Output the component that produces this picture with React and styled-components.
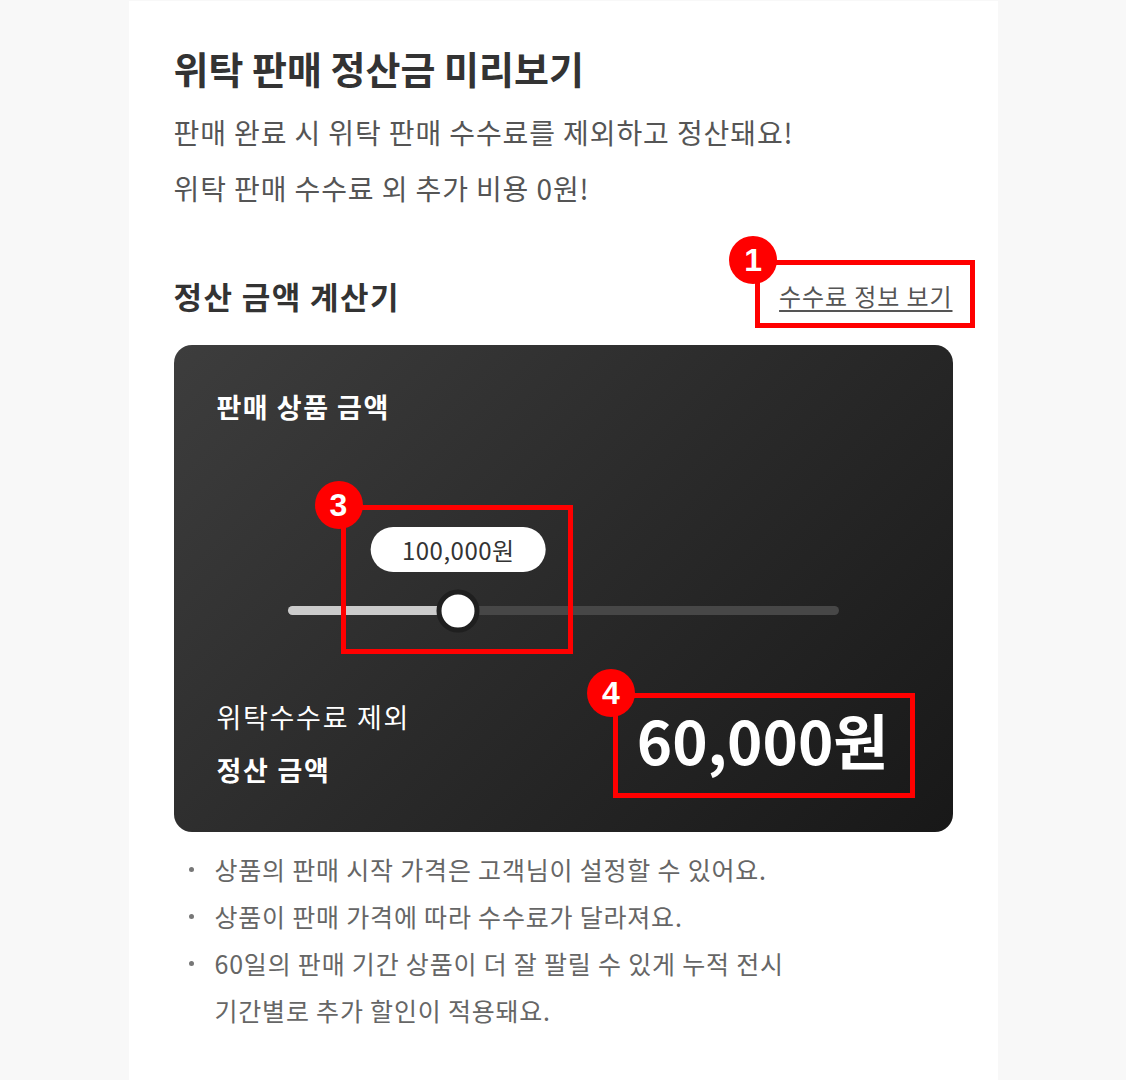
import styled, { createGlobalStyle } from "styled-components";

const GlobalStyle = createGlobalStyle`
  * { box-sizing: border-box; }
  body {
    margin: 0;
    background: #f8f8f8;
    font-family: "Noto Sans CJK KR", "Noto Sans", sans-serif;
  }
`;

const Page = styled.div`
  width: 869px;
  min-height: 1080px;
  margin: 1px auto 0;
  background: #ffffff;
  padding: 42px 45px 0;
`;

const Title = styled.h1`
  margin: 0;
  font-size: 38px;
  line-height: 50px;
  font-weight: 700;
  color: #333;
`;

const Lead = styled.p`
  margin: 11px 0 0;
  font-size: 28px;
  line-height: 56px;
  font-weight: 400;
  color: #555;
  letter-spacing: 0.9px;
`;

const SectionHead = styled.div`
  display: flex;
  justify-content: space-between;
  align-items: center;
  margin-top: 60px;
  height: 40px;
`;

const SectionTitle = styled.h2`
  margin: 0;
  font-size: 31px;
  line-height: 40px;
  font-weight: 700;
  color: #333;
  letter-spacing: 1.4px;
`;

const InfoLink = styled.a`
  display: block;
  font-size: 24px;
  line-height: 32px;
  color: #555;
  text-decoration: underline;
  text-underline-offset: 4px;
  letter-spacing: 0.9px;
`;

const Annotated = styled.div`
  position: relative;
`;

const Frame = styled.span`
  position: absolute;
  top: ${(p) => p.$t}px;
  left: ${(p) => p.$l}px;
  width: ${(p) => p.$w}px;
  height: ${(p) => p.$h}px;
  border: 5px solid #ff0000;
  pointer-events: none;
`;

const Badge = styled.span`
  position: absolute;
  top: -29px;
  left: -31px;
  width: 48px;
  height: 48px;
  border-radius: 50%;
  background: #ff0000;
  color: #fff;
  font-family: "Liberation Sans", Arial, sans-serif;
  font-weight: 700;
  font-size: 32px;
  line-height: 48px;
  text-align: center;
`;

const Card = styled.section`
  margin-top: 29px;
  border-radius: 18px;
  background: linear-gradient(135deg, #3d3d3d 0%, #2a2a2a 50%, #181818 100%);
  padding: 44px 43px 36px;
  color: #fff;
`;

const CardLabel = styled.div`
  font-size: 27px;
  line-height: 36px;
  font-weight: 700;
  letter-spacing: 1.5px;
`;

const SliderArea = styled.div`
  position: relative;
  width: 551px;
  margin: 102px auto 0;
  padding-top: 45px;
  height: 105px;
`;

const ValuePill = styled.div`
  position: absolute;
  top: 0;
  transform: translateX(-50%);
  height: 45px;
  padding: 0 31px;
  border-radius: 23px;
  background: #fff;
  color: #333;
  font-size: 24px;
  line-height: 45px;
  white-space: nowrap;
  letter-spacing: 0.5px;
`;

const Track = styled.div`
  position: relative;
  margin-top: 34px;
  height: 9px;
  border-radius: 5px;
  background: #474747;
`;

const Fill = styled.div`
  height: 100%;
  border-radius: 5px;
  background: #cbcbcb;
`;

const Thumb = styled.div`
  position: absolute;
  top: 50%;
  width: 43px;
  height: 43px;
  border-radius: 50%;
  background: #fff;
  border: 5px solid #1f1f1f;
  transform: translate(-50%, -50%);
`;

const ResultRow = styled.div`
  display: flex;
  justify-content: space-between;
  align-items: center;
  margin-top: 58px;
`;

const ResultLabel = styled.div`
  font-size: 27px;
  line-height: 53px;
  letter-spacing: 1.7px;
  font-weight: ${(p) => (p.$bold ? 700 : 400)};
`;

const Amount = styled.div`
  margin: 0 21px 8px 0;
  font-size: 60px;
  line-height: 58px;
  font-weight: 700;
`;

const Notes = styled.ul`
  margin: 14px 0 0;
  padding: 0 0 0 41px;
  list-style: none;
  width: 660px;
  word-break: keep-all;
`;

const Note = styled.li`
  display: flex;
  font-size: 25px;
  line-height: 47px;
  color: #666;
  letter-spacing: 0.8px;

  &::before {
    content: "";
    flex: none;
    width: 5px;
    height: 5px;
    margin: 21px 21px 0 -26px;
    border-radius: 50%;
    background: #777;
  }
`;

const value = 0.31;

export default function App() {
  return (
    <>
      <GlobalStyle />
      <Page>
        <Title>위탁 판매 정산금 미리보기</Title>
        <Lead>
          판매 완료 시 위탁 판매 수수료를 제외하고 정산돼요!
          <br />
          위탁 판매 수수료 외 추가 비용 0원!
        </Lead>

        <SectionHead>
          <SectionTitle>정산 금액 계산기</SectionTitle>
          <Annotated>
            <InfoLink>수수료 정보 보기</InfoLink>
            <Frame $t={-20} $l={-24} $w={220} $h={68}>
              <Badge>1</Badge>
            </Frame>
          </Annotated>
        </SectionHead>

        <Card>
          <CardLabel>판매 상품 금액</CardLabel>
          <SliderArea>
            <ValuePill style={{ left: `${value * 100}%` }}>100,000원</ValuePill>
            <Track>
              <Fill style={{ width: `${value * 100}%` }} />
              <Thumb style={{ left: `${value * 100}%` }} />
            </Track>
            <Frame $t={-22} $l={53} $w={232} $h={149}>
              <Badge>3</Badge>
            </Frame>
          </SliderArea>

          <ResultRow>
            <div>
              <ResultLabel>위탁수수료 제외</ResultLabel>
              <ResultLabel $bold>정산 금액</ResultLabel>
            </div>
            <Annotated>
              <Amount>60,000원</Amount>
              <Frame $t={-17} $l={-24} $w={302} $h={105}>
                <Badge>4</Badge>
              </Frame>
            </Annotated>
          </ResultRow>
        </Card>

        <Notes>
          <Note>상품의 판매 시작 가격은 고객님이 설정할 수 있어요.</Note>
          <Note>상품이 판매 가격에 따라 수수료가 달라져요.</Note>
          <Note>
            60일의 판매 기간 상품이 더 잘 팔릴 수 있게 누적 전시 기간별로 추가
            할인이 적용돼요.
          </Note>
        </Notes>
      </Page>
    </>
  );
}
